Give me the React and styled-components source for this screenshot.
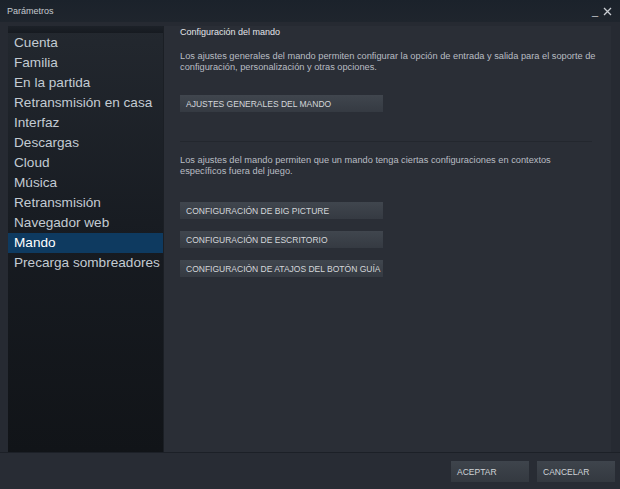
import styled, { createGlobalStyle } from 'styled-components'

const GlobalStyle = createGlobalStyle`
  html, body {
    margin: 0;
    padding: 0;
    background: #262a32;
  }
  * {
    box-sizing: border-box;
  }
`

const sections = [
  'Cuenta',
  'Familia',
  'En la partida',
  'Retransmisión en casa',
  'Interfaz',
  'Descargas',
  'Cloud',
  'Música',
  'Retransmisión',
  'Navegador web',
  'Mando',
  'Precarga sombreadores',
]

const App = () => {
  return (
    <>
      <GlobalStyle />
      <Window>
        <TitleBar>
          <Title>Parámetros</Title>
          <WindowControls>
            <Control>_</Control>
            <Control>
              <svg width='9' height='9' viewBox='0 0 9 9'>
                <path d='M1 1 L8 8 M8 1 L1 8' stroke='#c9cdd2' strokeWidth='1.3' />
              </svg>
            </Control>
          </WindowControls>
        </TitleBar>
        <Body>
          <Sidebar>
            <SidebarHead />
            <Menu>
              {sections.map((s) => (
                <MenuItem key={s} active={s === 'Mando'}>
                  {s}
                </MenuItem>
              ))}
            </Menu>
          </Sidebar>
          <Content>
            <Heading>Configuración del mando</Heading>
            <Text>
              Los ajustes generales del mando permiten configurar la opción de entrada y salida para el soporte de
              configuración, personalización y otras opciones.
            </Text>
            <Button first>AJUSTES GENERALES DEL MANDO</Button>
            <Divider />
            <Text>
              Los ajustes del mando permiten que un mando tenga ciertas configuraciones en contextos
              <br />
              específicos fuera del juego.
            </Text>
            <ButtonStack>
              <Button>CONFIGURACIÓN DE BIG PICTURE</Button>
              <Button>CONFIGURACIÓN DE ESCRITORIO</Button>
              <Button>CONFIGURACIÓN DE ATAJOS DEL BOTÓN GUÍA</Button>
            </ButtonStack>
          </Content>
        </Body>
        <Footer>
          <FooterButton>ACEPTAR</FooterButton>
          <FooterButton>CANCELAR</FooterButton>
        </Footer>
      </Window>
    </>
  )
}

export default App

const Window = styled.div`
  width: 620px;
  height: 489px;
  display: flex;
  flex-direction: column;
  background: #262a32;
  font-family: 'Liberation Sans', Arial, sans-serif;
  overflow: hidden;
`

const TitleBar = styled.div`
  height: 22px;
  flex: none;
  display: flex;
  align-items: center;
  justify-content: space-between;
  padding: 0 8px 0 7px;
  background: linear-gradient(#1b222b, #1f252d);
`

const Title = styled.span`
  font-size: 9px;
  color: #c6cacf;
`

const WindowControls = styled.div`
  display: flex;
  align-items: center;
  gap: 5px;
`

const Control = styled.span`
  color: #c9cdd2;
  font-size: 11px;
  line-height: 9px;
  display: flex;
  align-items: flex-end;
  height: 10px;
`

const Body = styled.div`
  flex: 1;
  display: flex;
  padding: 4px 9px 0 8px;
  min-height: 0;
`

const Sidebar = styled.div`
  width: 156px;
  flex: none;
  display: flex;
  flex-direction: column;
  background: linear-gradient(#23282f, #171b21 50%, #111418);
  border-right: 1px solid #1b1f25;
`

const SidebarHead = styled.div`
  height: 7px;
  background: linear-gradient(#1c2128, #161a20);
`

const Menu = styled.ul`
  list-style: none;
  margin: 0;
  padding: 0;
`

const MenuItem = styled.li`
  height: 20px;
  line-height: 20px;
  padding-left: 6px;
  font-size: 13.6px;
  color: ${(p) => (p.active ? '#ffffff' : '#c3cbd3')};
  background: ${(p) => (p.active ? '#0e3a60' : 'transparent')};
  white-space: nowrap;
`

const Content = styled.div`
  flex: 1;
  display: flex;
  flex-direction: column;
  padding: 0 12px 0 16px;
  background: #2a2e36;
`

const Heading = styled.div`
  font-size: 9px;
  color: #e4e6e9;
  line-height: 12px;
`

const Text = styled.p`
  margin: 13px 0 0;
  font-size: 9.25px;
  line-height: 11px;
  color: #b9bdc3;
`

const Button = styled.div`
  width: 203px;
  height: 17px;
  display: flex;
  align-items: center;
  padding-left: 6px;
  font-size: 8.5px;
  color: #d4d7db;
  background: linear-gradient(#40464e, #353a42);
  margin-top: ${(p) => (p.first ? '22px' : '0')};
`

const Divider = styled.div`
  height: 1px;
  background: #393e46;
  margin: 29px 7px 0 0;
  border-bottom: 1px solid #23272e;
`

const ButtonStack = styled.div`
  display: flex;
  flex-direction: column;
  gap: 12px;
  margin-top: 25px;
`

const Footer = styled.div`
  height: 37px;
  flex: none;
  display: flex;
  justify-content: flex-end;
  align-items: flex-start;
  gap: 8px;
  padding: 8px 5px 0 0;
  border-top: 1px solid #1c2027;
  background: #282c34;
`

const FooterButton = styled.div`
  width: 78px;
  height: 21px;
  display: flex;
  align-items: center;
  padding-left: 6px;
  font-size: 8.5px;
  color: #d0d4d8;
  background: linear-gradient(#3e444c, #343940);
`
